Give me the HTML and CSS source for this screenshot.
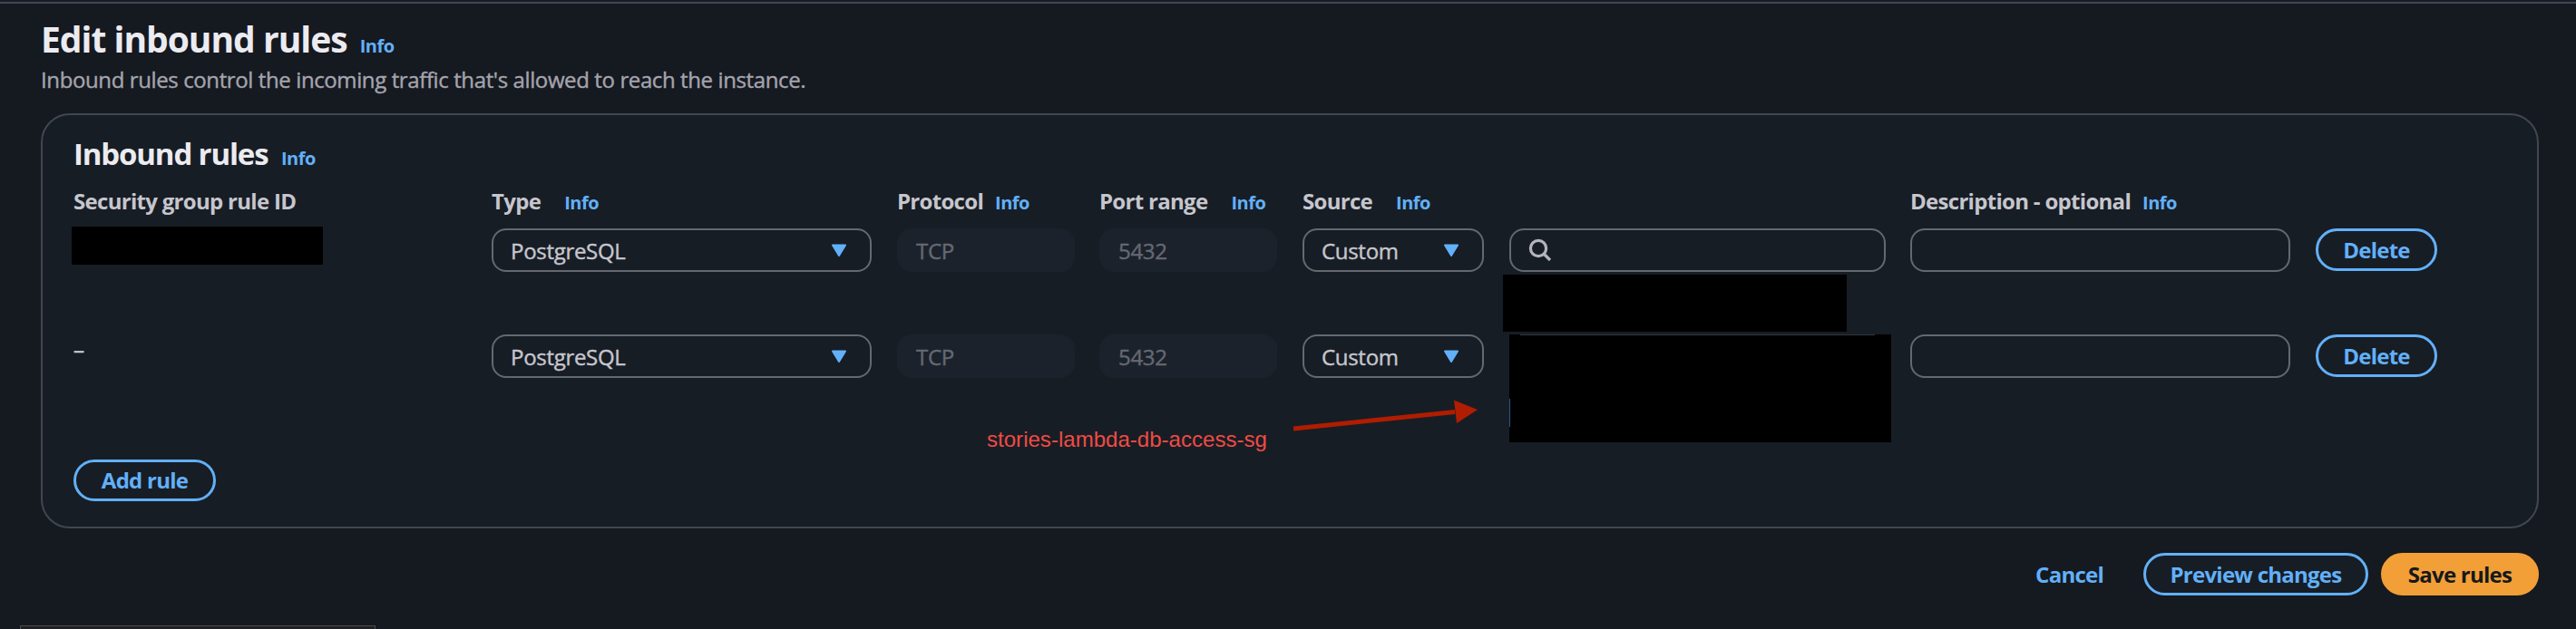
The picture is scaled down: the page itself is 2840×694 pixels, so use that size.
FILE: index.html
```
<!DOCTYPE html>
<html lang="en">
<head>
<meta charset="utf-8">
<title>Edit inbound rules</title>
<link rel="stylesheet" href="styles.css">
</head>
<body>
<main class="page">
  <header class="page-header">
    <h1 class="page-title">Edit inbound rules <a class="info info-title">Info</a></h1>
    <p class="subtitle">Inbound rules control the incoming traffic that's allowed to reach the instance.</p>
  </header>

  <section class="panel">
    <h2 class="panel-title">Inbound rules <a class="info info-panel">Info</a></h2>

    <div class="grid labels">
      <div class="label">Security group rule ID</div>
      <div class="label">Type<a class="info far">Info</a></div>
      <div class="label">Protocol<a class="info">Info</a></div>
      <div class="label">Port range<a class="info far">Info</a></div>
      <div class="label">Source<a class="info far">Info</a></div>
      <div></div>
      <div class="label">Description - optional<a class="info">Info</a></div>
    </div>

    <div class="grid rule">
      <div class="cell"></div>
      <div class="cell"><div class="field">PostgreSQL<svg class="caret" viewBox="0 0 18 15"><path d="M2 1.5H16L9 13Z"/></svg></div></div>
      <div class="cell tight"><div class="field disabled">TCP</div></div>
      <div class="cell"><div class="field disabled">5432</div></div>
      <div class="cell"><div class="field">Custom<svg class="caret" viewBox="0 0 18 15"><path d="M2 1.5H16L9 13Z"/></svg></div></div>
      <div class="cell tight"><div class="field"><svg class="search" viewBox="0 0 26 26"><circle cx="11" cy="11" r="8.6"/><path d="M17 17L24 24"/></svg></div></div>
      <div class="cell"><div class="field"></div></div>
      <button class="btn btn-delete">Delete</button>
    </div>

    <div class="grid rule">
      <div class="cell dash">–</div>
      <div class="cell"><div class="field">PostgreSQL<svg class="caret" viewBox="0 0 18 15"><path d="M2 1.5H16L9 13Z"/></svg></div></div>
      <div class="cell tight"><div class="field disabled">TCP</div></div>
      <div class="cell"><div class="field disabled">5432</div></div>
      <div class="cell"><div class="field">Custom<svg class="caret" viewBox="0 0 18 15"><path d="M2 1.5H16L9 13Z"/></svg></div></div>
      <div class="cell"></div>
      <div class="cell"><div class="field"></div></div>
      <button class="btn btn-delete">Delete</button>
    </div>

    <button class="btn btn-add">Add rule</button>
  </section>

  <footer class="actions">
    <a class="cancel">Cancel</a>
    <button class="btn btn-preview">Preview changes</button>
    <button class="btn btn-save">Save rules</button>
  </footer>

  <div class="redact redact-id"></div>
  <div class="redact redact-source"></div>
  <div class="redact redact-search"></div>
  <div class="note">stories-lambda-db-access-sg</div>
  <svg class="arrow" viewBox="0 0 210 30"><path class="shaft" d="M3 33L181 14.5"/><path class="head" d="M180 1.5L206 12L183 27Z"/></svg>
  <div class="status"></div>
</main>
</body>
</html>
```
FILE: styles.css
```
* { box-sizing: border-box; }

body {
  margin: 0;
  background: #151920;
  color: #c6c6cd;
  font-family: "Open Sans", sans-serif;
  font-size: 24px;
}

.page {
  position: relative;
  width: 2840px;
  height: 694px;
  padding: 14px 41px 0 45px;
  border-top: 2px solid #171d25;
  overflow: hidden;
}

.page::before {
  content: "";
  position: absolute;
  inset: 0 0 auto;
  height: 2px;
  background: #424650;
}

.page-title, .panel-title, .subtitle { margin: 0; white-space: nowrap; }

.page-title {
  margin-top: 2px;
  font-size: 39px;
  line-height: 50px;
  letter-spacing: -1px;
  color: #ebebf0;
}

.subtitle {
  margin-top: 6px;
  line-height: 28px;
  letter-spacing: -0.39px;
  color: #a4a4ad;
  -webkit-text-stroke: 0.4px;
}

.info {
  margin-left: 13px;
  color: #62b0f8;
  font-size: 20px;
  line-height: 0;
  font-weight: 700;
  letter-spacing: -0.5px;
}

.info.far { margin-left: 26px; }
.info.info-title { margin-left: 5px; }
.info.info-panel { margin-left: 7px; }

.panel {
  height: 458px;
  margin-top: 23px;
  padding: 21px 34px 0;
  border: 2px solid #424650;
  border-radius: 32px;
  background: #171d25;
}

.panel-title {
  font-size: 33px;
  line-height: 44px;
  letter-spacing: -1.15px;
  color: #ebebf0;
}

.grid {
  display: grid;
  grid-template-columns: 461px 447px 223px 224px 228px 442px 447px 134px;
  align-items: start;
}

.labels { margin: 15px 0; }

.label {
  line-height: 30px;
  font-weight: 700;
  letter-spacing: -0.7px;
  white-space: nowrap;
}

.rule { height: 117px; }

.cell { padding-right: 28px; }
.cell.tight { padding-right: 27px; }

.field {
  display: flex;
  align-items: center;
  height: 48px;
  padding: 0 25px 0 19px;
  border: 2px solid #656871;
  border-radius: 16px;
  letter-spacing: -0.3px;
  -webkit-text-stroke: 0.4px;
}

.disabled {
  border-color: #1c222c;
  background: #1c222c;
  color: #656871;
}

.caret {
  width: 18px;
  height: 15px;
  margin-left: auto;
  fill: #62b0f8;
  stroke: #62b0f8;
  stroke-width: 2;
  stroke-linejoin: round;
}

.search {
  width: 26px;
  height: 26px;
  fill: none;
  stroke: #b4b4bb;
  stroke-width: 3.2;
}

.dash { line-height: 34px; -webkit-text-stroke: 0.6px; }

.btn {
  display: flex;
  align-items: center;
  justify-content: center;
  height: 47px;
  padding: 0 0 1px;
  border: 3px solid #62b0f8;
  border-radius: 24px;
  background: #171d25;
  color: #62b0f8;
  font: 700 24px "Open Sans", sans-serif;
  letter-spacing: -0.75px;
}

.btn-add { width: 157px; height: 46px; margin-top: 21px; }

.actions {
  display: flex;
  align-items: center;
  justify-content: flex-end;
  margin-top: 27px;
}

.cancel {
  margin-right: 44px;
  color: #62b0f8;
  font-weight: 700;
  letter-spacing: -0.75px;
}

.btn-preview { width: 248px; margin-right: 14px; }
.btn-save { width: 174px; border-color: #f29f38; background: #f29f38; color: #15181c; }

/* Boxes and annotation laid over the form */
.redact { position: absolute; background: #000; }
.redact-id { left: 79px; top: 248px; width: 277px; height: 42px; }
.redact-source { left: 1657px; top: 301px; width: 379px; height: 63px; }
.redact-search { left: 1664px; top: 367px; width: 421px; height: 119px; }

.redact-search::before {
  content: "";
  position: absolute;
  left: 12px;
  right: 18px;
  top: 0;
  height: 1px;
  background: #34363b;
}

.redact-search::after {
  content: "";
  position: absolute;
  left: 0;
  top: 71px;
  width: 1px;
  height: 31px;
  background: #29568c;
}

.note {
  position: absolute;
  left: 1088px;
  top: 469px;
  font: 24px/28px "Liberation Sans", Arial, sans-serif;
  letter-spacing: 0.03px;
  color: #f04b43;
  white-space: nowrap;
}

.arrow {
  position: absolute;
  left: 1423px;
  top: 438px;
  width: 210px;
  height: 30px;
  overflow: visible;
}

.shaft { stroke: #b01d00; stroke-width: 5; }
.head { fill: #b01d00; }

.status {
  position: absolute;
  left: 22px;
  top: 688px;
  width: 392px;
  height: 6px;
  border: 1px solid #4a4b4c;
  background: #202122;
}
```
